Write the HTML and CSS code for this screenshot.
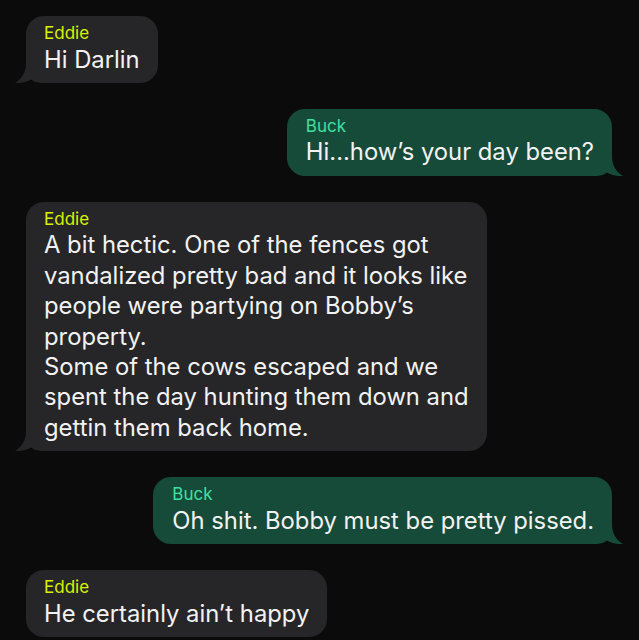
FILE: index.html
```html
<!DOCTYPE html>
<html>
<head>
<meta charset="utf-8">
<link rel="stylesheet" href="styles.css">
</head>
<body>
<div class="chat">
  <div class="msg in">
    <div class="bubble">
      <div class="name">Eddie</div>
      <div class="text">Hi Darlin</div>
      <svg class="tail" viewBox="0 0 30 20" width="30" height="20"><path d="M11,0 C11,9 7,16 0,20 C6,20.5 12,19 16,16.5 C19,19 23,20 30,20 L30,0 Z"/></svg>
    </div>
  </div>
  <div class="msg out">
    <div class="bubble">
      <div class="name">Buck</div>
      <div class="text">Hi...how’s your day been?</div>
      <svg class="tail" viewBox="0 0 30 20" width="30" height="20"><path d="M11,0 C11,9 7,16 0,20 C6,20.5 12,19 16,16.5 C19,19 23,20 30,20 L30,0 Z"/></svg>
    </div>
  </div>
  <div class="msg in">
    <div class="bubble">
      <div class="name">Eddie</div>
      <div class="text">A bit hectic. One of the fences got<br>vandalized pretty bad and it looks like<br>people were partying on Bobby’s<br>property.<br>Some of the cows escaped and we<br>spent the day hunting them down and<br>gettin them back home.</div>
      <svg class="tail" viewBox="0 0 30 20" width="30" height="20"><path d="M11,0 C11,9 7,16 0,20 C6,20.5 12,19 16,16.5 C19,19 23,20 30,20 L30,0 Z"/></svg>
    </div>
  </div>
  <div class="msg out">
    <div class="bubble">
      <div class="name">Buck</div>
      <div class="text">Oh shit. Bobby must be pretty pissed.</div>
      <svg class="tail" viewBox="0 0 30 20" width="30" height="20"><path d="M11,0 C11,9 7,16 0,20 C6,20.5 12,19 16,16.5 C19,19 23,20 30,20 L30,0 Z"/></svg>
    </div>
  </div>
  <div class="msg in">
    <div class="bubble">
      <div class="name">Eddie</div>
      <div class="text">He certainly ain’t happy</div>
    </div>
  </div>
</div>
</body>
</html>
```
FILE: styles.css
```css
html, body {
  margin: 0;
  padding: 0;
  background: #0b0b0b;
}
body {
  font-family: Inter, "Noto Sans", sans-serif;
  color: #f2f2f2;
  width: 639px;
  height: 640px;
  overflow: hidden;
}
.chat {
  display: flex;
  flex-direction: column;
  gap: 26px;
  padding: 16px 27px 0 26px;
}
.msg {
  display: flex;
}
.msg.in { justify-content: flex-start; }
.msg.out { justify-content: flex-end; }
.bubble {
  position: relative;
  border-radius: 18px;
  padding: 7px 18px 8px 18px;
}
.msg.in .bubble { background: #262628; }
.msg.out .bubble { background: #174b39; padding-left: 19px; }
.name {
  font-size: 17px;
  line-height: 21.5px;
}
.msg.in .name { color: #d9f200; }
.msg.out .name { color: #3fe0a2; }
.text {
  font-size: 23.8px;
  line-height: 30.4px;
  white-space: nowrap;
}
.text.wide { letter-spacing: 0.1px; }
.tail {
  position: absolute;
  bottom: 0;
  left: -11px;
}
.msg.in .tail { fill: #262628; }
.msg.out .tail {
  fill: #174b39;
  left: auto;
  right: -11px;
  transform: scaleX(-1);
}
```
